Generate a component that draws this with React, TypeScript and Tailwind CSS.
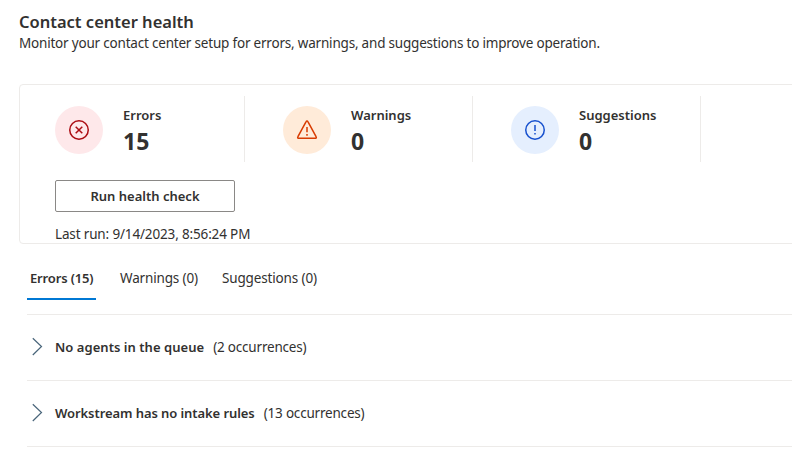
import React from "react";

type Metric = {
  label: string;
  value: number;
  circle: string;
  icon: React.ReactNode;
};

const metrics: Metric[] = [
  {
    label: "Errors",
    value: 15,
    circle: "bg-[#fee8ea] text-[#ab0c12]",
    icon: (
      <>
        <circle cx="12" cy="12" r="9.25" />
        <path d="M8.7 8.7l6.6 6.6M15.3 8.7l-6.6 6.6" />
      </>
    ),
  },
  {
    label: "Warnings",
    value: 0,
    circle: "bg-[#ffebd9] text-[#d83b01]",
    icon: (
      <>
        <path d="M11.1 3.6a1 1 0 0 1 1.8 0l8.3 15.2a1 1 0 0 1-.9 1.5H3.7a1 1 0 0 1-.9-1.5z" />
        <path d="M12 9v5.2M12 16v1.7" />
      </>
    ),
  },
  {
    label: "Suggestions",
    value: 0,
    circle: "bg-[#e5effe] text-[#1650ce]",
    icon: (
      <>
        <circle cx="12" cy="12" r="9.25" />
        <path d="M12 7v6M12 15v1.6" />
      </>
    ),
  },
];

const issues = [
  { title: "No agents in the queue", count: "(2 occurrences)", tracking: "tracking-[0.04px]" },
  { title: "Workstream has no intake rules", count: "(13 occurrences)", tracking: "tracking-[-0.08px]" },
];

function MetricTile({ label, value, circle, icon }: Metric) {
  return (
    <div className="flex h-[66px] w-[228px] shrink-0 border-r border-[#edebe9] pt-[10px]">
      <div className={`ml-[38px] flex size-12 items-center justify-center rounded-full ${circle}`}>
        <svg width="24" height="24" viewBox="0 0 24 24" fill="none" stroke="currentColor" strokeWidth="1.5">
          {icon}
        </svg>
      </div>
      <div className="ml-5">
        <div className="-mt-px text-[13px] leading-5 font-semibold">{label}</div>
        <div className="text-[23px] leading-8 font-bold tracking-[0.2px]">{value}</div>
      </div>
    </div>
  );
}

export default function App() {
  return (
    <main className="h-[471px] w-[792px] overflow-hidden bg-white font-['Noto_Sans',sans-serif] text-[13.5px] leading-5 whitespace-nowrap text-[#323130]">
      <header className="pt-[10px] pl-[19px]">
        <h1 className="text-[16.5px] leading-6 font-semibold">Contact center health</h1>
        <p className="-mt-px tracking-[-0.2px]">
          Monitor your contact center setup for errors, warnings, and suggestions to improve operation.
        </p>
      </header>

      <section className="mt-[31px] ml-[19px] h-[160px] w-[790px] rounded-[4px] border border-[#edebe9] pt-[11px] pl-[24px]">
        <div className="-ml-[27px] flex w-[684px]">
          {metrics.map((metric) => (
            <MetricTile key={metric.label} {...metric} />
          ))}
        </div>
        <div className="ml-[11px]">
          <button className="mt-[18px] h-8 w-[180px] rounded-[2px] border border-[#8a8886] bg-white text-[13px] font-semibold">
            Run health check
          </button>
          <p className="mt-3 tracking-[-0.15px]">Last run: 9/14/2023, 8:56:24 PM</p>
        </div>
      </section>

      <nav className="mt-[14px] ml-[27px] flex h-[42px]">
        <div className="w-[69px] border-b-2 border-[#0078d4] pt-[10px] pl-[3px] text-[13px] font-semibold tracking-[-0.15px]">
          Errors (15)
        </div>
        <div className="ml-[24px] w-[102px] pt-[10px] tracking-[-0.15px]">Warnings (0)</div>
        <div className="pt-[10px] tracking-[-0.15px]">Suggestions (0)</div>
      </nav>

      <ul className="mt-[14px] ml-[27px] border-t border-[#edebe9]">
        {issues.map((issue) => (
          <li key={issue.title} className="flex h-[66px] items-center border-b border-[#edebe9] pb-[2px]">
            <svg className="mr-3 ml-[4px]" width="12" height="20" viewBox="0 0 12 20" fill="none" stroke="#49657a" strokeWidth="1.2">
              <path d="M1.8 1.2l8.7 8.3L1.8 18" />
            </svg>
            <span className={`text-[13px] font-semibold ${issue.tracking}`}>{issue.title}</span>
            <span className="ml-[9px] tracking-[-0.2px]">{issue.count}</span>
          </li>
        ))}
      </ul>
    </main>
  );
}
